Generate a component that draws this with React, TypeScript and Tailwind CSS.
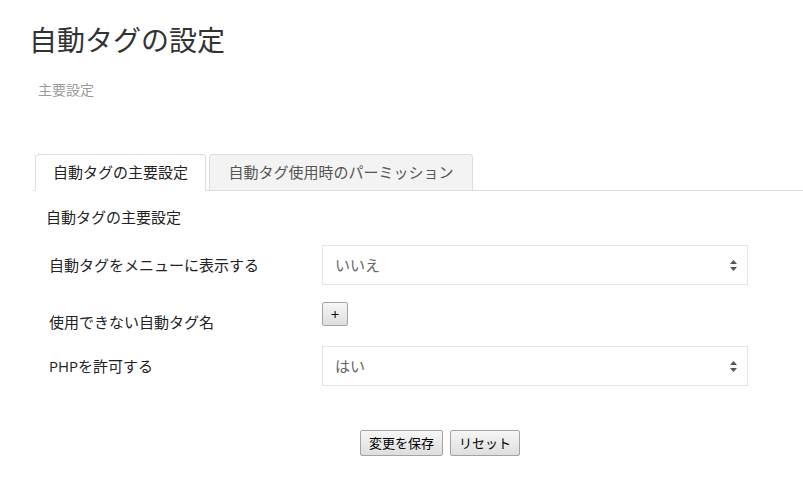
import React from 'react';

const font = { fontFamily: '"Open Sans", "Noto Sans CJK JP", sans-serif' };

function SelectBox({ value }: { value: string }) {
  return (
    <div className="flex h-[40px] w-[426px] items-center justify-between border border-[#e3e3e3] bg-white pl-[12px] pr-[10px] text-[15px] text-[#666]">
      <span>{value}</span>
      <svg width="7" height="11" viewBox="0 0 7 11" className="fill-[#555]">
        <path d="M3.5 0 L7 4 L0 4 Z" />
        <path d="M0 7 L7 7 L3.5 11 Z" />
      </svg>
    </div>
  );
}

function LegacyButton({ children, className = '' }: { children: React.ReactNode; className?: string }) {
  return (
    <button className={`rounded-[2px] border border-[#a3a3a3] bg-gradient-to-b from-[#f6f6f6] to-[#dedede] text-[13px] leading-none text-black ${className}`}>
      {children}
    </button>
  );
}

export default function App() {
  return (
    <div className="min-h-screen bg-white text-[#333]" style={font}>
      <div className="pl-[29px] pt-[22px]">
        <h1 className="h-[36px] text-[28px] font-normal leading-[36px] text-[#333]">自動タグの設定</h1>
        <p className="mt-[22px] ml-[9px] text-[14px] leading-[20px] text-[#999]">主要設定</p>
      </div>

      <div className="mt-[54px] ml-[33px] flex h-[37px] items-end border-b border-[#dcdcdc] pl-[2px]">
        <div className="mb-[-1px] flex h-[37px] w-[171px] items-center justify-center rounded-t-[4px] border border-b-white border-[#dcdcdc] bg-white text-[15px] text-[#222]">
          自動タグの主要設定
        </div>
        <div className="ml-[3px] flex h-[36px] w-[264px] items-center justify-center rounded-t-[4px] border border-b-0 border-[#dcdcdc] bg-[#f3f3f3] text-[15px] text-[#555]">
          自動タグ使用時のパーミッション
        </div>
      </div>

      <div className="pl-[46px]">
        <h2 className="mt-[16px] text-[15px] font-normal leading-[20px] text-[#222]">自動タグの主要設定</h2>

        <div className="mt-[18px] flex items-center pl-[3px]">
          <div className="w-[273px] text-[15px] text-[#222]">自動タグをメニューに表示する</div>
          <SelectBox value="いいえ" />
        </div>

        <div className="mt-[17px] flex items-start pl-[3px]">
          <div className="w-[273px] pt-[10px] text-[15px] leading-[20px] text-[#222]">使用できない自動タグ名</div>
          <LegacyButton className="h-[24px] w-[26px] text-[15px]">+</LegacyButton>
        </div>

        <div className="mt-[14px] flex items-center pl-[3px]">
          <div className="w-[273px] text-[15px] text-[#222]">PHPを許可する</div>
          <SelectBox value="はい" />
        </div>

        <div className="mt-[44px] flex gap-[7px] pl-[314px]">
          <LegacyButton className="h-[26px] px-[8px]">変更を保存</LegacyButton>
          <LegacyButton className="h-[26px] px-[8px]">リセット</LegacyButton>
        </div>
      </div>
    </div>
  );
}
